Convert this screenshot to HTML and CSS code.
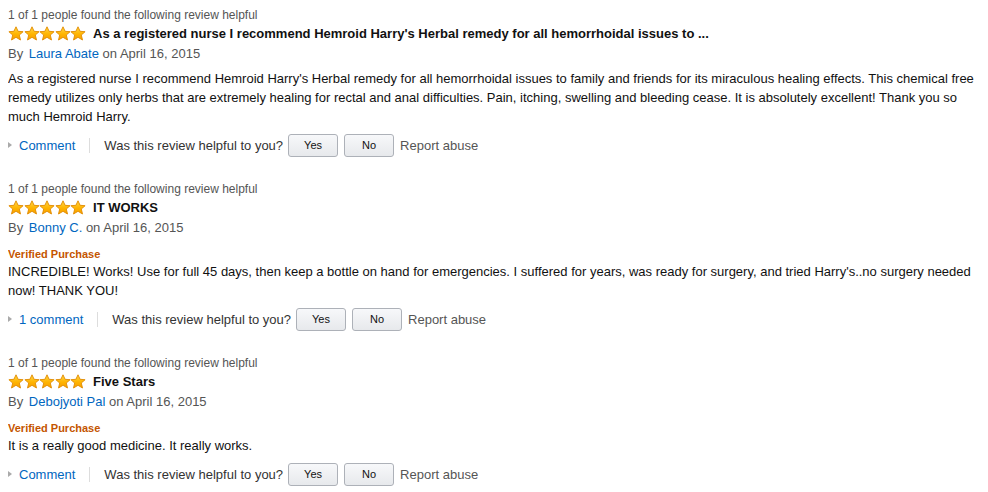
FILE: index.html
```html
<!DOCTYPE html>
<html>
<head>
	<title>Customer Reviews</title>

	<link rel="stylesheet" href="styles.css">
</head>
<body>
	<svg class="defs" width="0" height="0">
		<defs>
			<linearGradient id="gold" x1="0" y1="0" x2="0" y2="1">
				<stop offset="0" stop-color="#ffd84a" />
				<stop offset="0.55" stop-color="#ffb400" />
				<stop offset="1" stop-color="#f79e00" />
			</linearGradient>
			<symbol id="star" viewBox="0 0 16 15">
				<polygon points="8,0.8 10.1,5.3 15.1,5.7 11.3,9 12.5,14 8,11.3 3.5,14 4.7,9 0.9,5.7 5.9,5.3"
					fill="url(#gold)" stroke="#e08a00" stroke-width="0.9" stroke-linejoin="round" />
			</symbol>
		</defs>
	</svg>

	<div class="review">
		<div class="helpful-count">1 of 1 people found the following review helpful</div>
		<div class="title-row">
			<span class="stars">
				<svg><use href="#star" /></svg><svg><use href="#star" /></svg><svg><use href="#star" /></svg><svg><use href="#star" /></svg><svg><use href="#star" /></svg>
			</span>
			<span class="review-title">As a registered nurse I recommend Hemroid Harry's Herbal remedy for all hemorrhoidal issues to ...</span>
		</div>
		<div class="byline">By <a class="author" href="#">Laura Abate</a> on April 16, 2015</div>
		<div class="review-text">As a registered nurse I recommend Hemroid Harry's Herbal remedy for all hemorrhoidal issues to family and friends for its miraculous healing effects. This chemical free remedy utilizes only herbs that are extremely healing for rectal and anal difficulties. Pain, itching, swelling and bleeding cease. It is absolutely excellent! Thank you so much Hemroid Harry.</div>
		<div class="actions">
			<a class="comment-link" href="#">Comment</a>
			<span class="divider"></span>
			<span class="helpful-question">Was this review helpful to you?</span>
			<button class="vote">Yes</button>
			<button class="vote">No</button>
			<span class="report">Report abuse</span>
		</div>
	</div>

	<div class="review">
		<div class="helpful-count">1 of 1 people found the following review helpful</div>
		<div class="title-row">
			<span class="stars">
				<svg><use href="#star" /></svg><svg><use href="#star" /></svg><svg><use href="#star" /></svg><svg><use href="#star" /></svg><svg><use href="#star" /></svg>
			</span>
			<span class="review-title">IT WORKS</span>
		</div>
		<div class="byline">By <a class="author" href="#">Bonny C.</a> on April 16, 2015</div>
		<div class="verified">Verified Purchase</div>
		<div class="review-text">INCREDIBLE! Works! Use for full 45 days, then keep a bottle on hand for emergencies. I suffered for years, was ready for surgery, and tried Harry's..no surgery needed now! THANK YOU!</div>
		<div class="actions">
			<a class="comment-link" href="#">1 comment</a>
			<span class="divider"></span>
			<span class="helpful-question">Was this review helpful to you?</span>
			<button class="vote">Yes</button>
			<button class="vote">No</button>
			<span class="report">Report abuse</span>
		</div>
	</div>

	<div class="review">
		<div class="helpful-count">1 of 1 people found the following review helpful</div>
		<div class="title-row">
			<span class="stars">
				<svg><use href="#star" /></svg><svg><use href="#star" /></svg><svg><use href="#star" /></svg><svg><use href="#star" /></svg><svg><use href="#star" /></svg>
			</span>
			<span class="review-title">Five Stars</span>
		</div>
		<div class="byline">By <a class="author" href="#">Debojyoti Pal</a> on April 16, 2015</div>
		<div class="verified">Verified Purchase</div>
		<div class="review-text">It is a really good medicine. It really works.</div>
		<div class="actions">
			<a class="comment-link" href="#">Comment</a>
			<span class="divider"></span>
			<span class="helpful-question">Was this review helpful to you?</span>
			<button class="vote">Yes</button>
			<button class="vote">No</button>
			<span class="report">Report abuse</span>
		</div>
	</div>
</body>
</html>
```

FILE: styles.css
```css
body {
	margin: 6px 8px;
	font-family: "Liberation Sans", Arial, sans-serif;
	font-size: 13px;
	line-height: 19px;
	color: #111;
	background: #fff;
}
a {
	color: #0066c0;
	text-decoration: none;
}
.defs {
	position: absolute;
}

.review {
	margin-bottom: 24px;
}
.helpful-count {
	font-size: 12px;
	line-height: 18px;
	color: #555;
}
.title-row {
	display: flex;
	align-items: center;
}
.stars {
	display: flex;
	margin-right: 7px;
}
.stars svg {
	width: 16px;
	height: 15px;
	margin-right: -0.4px;
}
.review-title {
	font-weight: bold;
}
.byline {
	margin-top: 1px;
	color: #555;
}
.author {
	margin-left: 2px;
}
.verified {
	margin-top: 9px;
	font-size: 11px;
	line-height: 16px;
	font-weight: bold;
	color: #c45500;
}
.review-text {
	margin-top: 6px;
}
.verified + .review-text {
	margin-top: 0;
}

.actions {
	display: flex;
	align-items: center;
	height: 22px;
	margin-top: 8px;
}
.comment-link {
	display: flex;
	align-items: center;
}
.comment-link::before {
	content: "";
	border-left: 4px solid #aaa;
	border-top: 3.5px solid transparent;
	border-bottom: 3.5px solid transparent;
	margin-right: 7px;
}
.divider {
	width: 1px;
	height: 15px;
	background: #ddd;
	margin: 0 14px;
}
.helpful-question {
	color: #333;
	margin-right: 5px;
}
.vote {
	width: 50px;
	height: 23px;
	margin: 0 6px 0 0;
	padding: 0;
	border: 1px solid #adb1b8;
	border-radius: 3px;
	background: linear-gradient(#f7f8fa, #e7e9ec);
	font-family: "Liberation Sans", Arial, sans-serif;
	font-size: 11px;
	color: #111;
}
.report {
	color: #555;
}
```
